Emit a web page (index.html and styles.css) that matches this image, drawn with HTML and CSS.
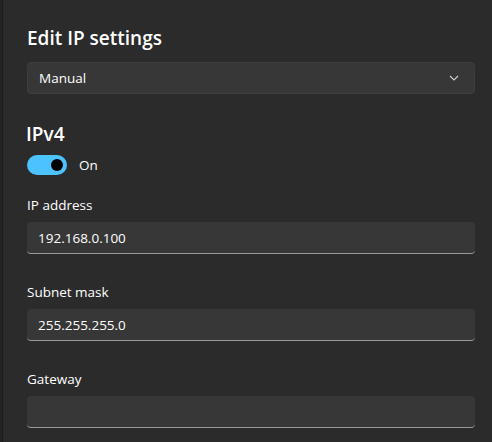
FILE: index.html
```html
<!DOCTYPE html>
<html lang="en">
<head>
<meta charset="utf-8">
<title>Edit IP settings</title>
<link rel="stylesheet" href="styles.css">
</head>
<body>
<div class="screen">
  <div class="edge"></div>
  <div class="dialog">
    <h1 class="title">Edit IP settings</h1>
    <div class="select">
      <span>Manual</span>
      <svg class="chevron" width="10" height="6" viewBox="0 0 10 6"><path d="M1 1 L5 5 L9 1" fill="none" stroke="#cfcfcf" stroke-width="1.1"/></svg>
    </div>
    <h2 class="section">IPv4</h2>
    <div class="toggle-row">
      <span class="toggle"><span class="knob"></span></span>
      <span class="toggle-text">On</span>
    </div>
    <div class="field-label first">IP address</div>
    <div class="input">192.168.0.100</div>
    <div class="field-label">Subnet mask</div>
    <div class="input">255.255.255.0</div>
    <div class="field-label">Gateway</div>
    <div class="input"></div>
  </div>
</div>
</body>
</html>
```
FILE: styles.css
```css
html, body {
  margin: 0;
  padding: 0;
  background: #2b2b2b;
  overflow: hidden;
}
.screen {
  display: flex;
  width: 492px;
  height: 442px;
  font-family: "Open Sans", "Noto Sans", sans-serif;
  color: #ffffff;
}
.edge {
  width: 2px;
  flex: none;
  background: #242424;
  border-right: 1px solid #1c1c1c;
}
.dialog {
  flex: 1;
  background: #2b2b2b;
  padding: 24px 17px 0 24px;
  display: flex;
  flex-direction: column;
}
.title {
  margin: 0;
  font-size: 19px;
  font-weight: 600;
  line-height: 28px;
  height: 28px;
}
.select {
  margin-top: 10px;
  height: 32px;
  box-sizing: border-box;
  background: #373737;
  border: 1px solid #3d3d3d;
  border-radius: 4px;
  display: flex;
  align-items: center;
  justify-content: space-between;
  padding: 0 15px 0 11px;
  font-size: 13.5px;
}
.chevron {
  display: block;
}
.section {
  margin: 26px 0 0 -1px;
  font-size: 19px;
  font-weight: 600;
  line-height: 28px;
  height: 28px;
}
.toggle-row {
  margin-top: 7px;
  height: 20px;
  display: flex;
  align-items: center;
  gap: 12px;
  font-size: 13.5px;
}
.toggle {
  width: 40px;
  height: 20px;
  border-radius: 10px;
  background: #4cc2ff;
  display: flex;
  align-items: center;
  justify-content: flex-end;
  padding-right: 4px;
  box-sizing: border-box;
}
.knob {
  width: 12px;
  height: 12px;
  border-radius: 50%;
  background: #000000;
}
.field-label {
  margin-top: 28px;
  font-size: 13.5px;
  line-height: 20px;
  height: 20px;
}
.field-label.first {
  margin-top: 20px;
}
.input {
  margin-top: 7px;
  height: 32px;
  box-sizing: border-box;
  background: #373737;
  border-radius: 4px;
  border-bottom: 1px solid #9a9a9a;
  display: flex;
  align-items: center;
  padding: 0 11px;
  font-size: 13.5px;
}
```
